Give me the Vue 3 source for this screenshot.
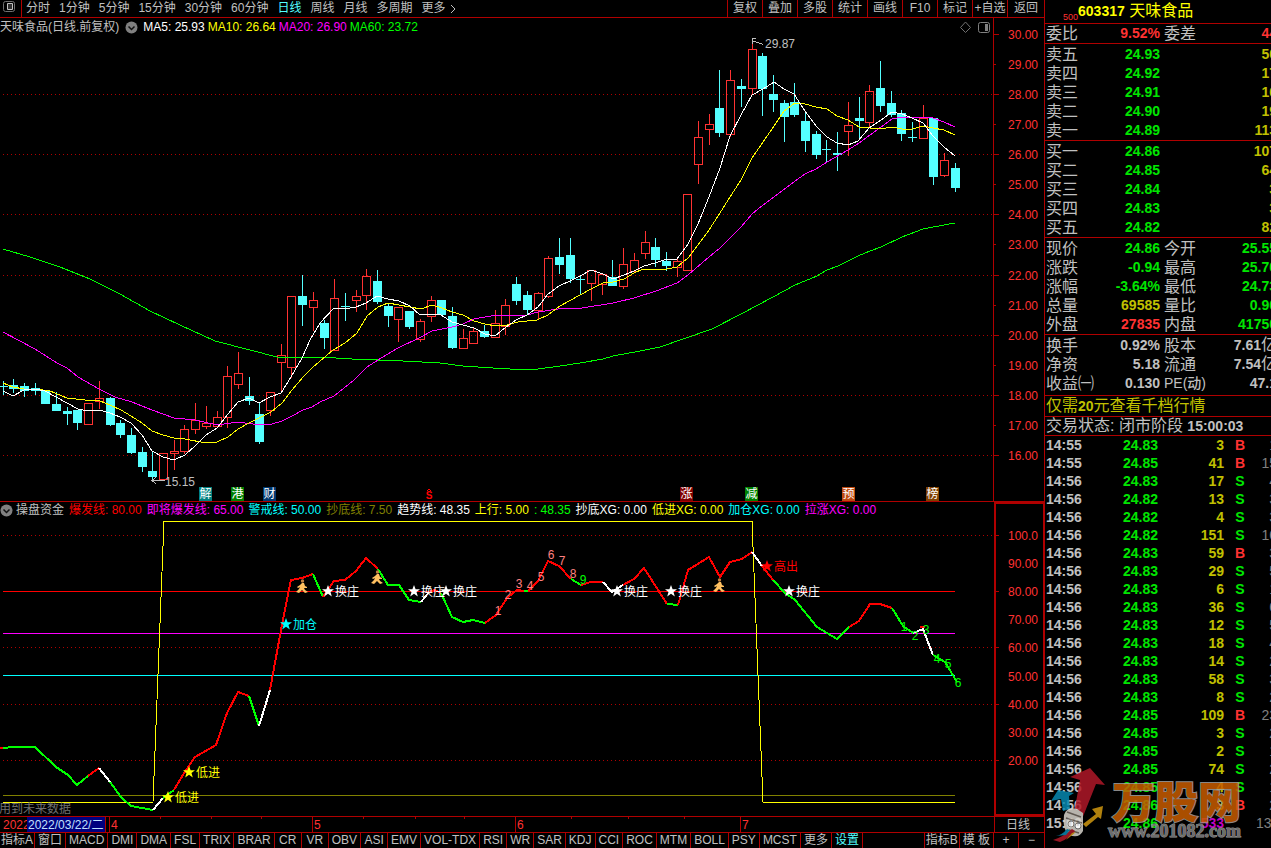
<script setup>
const periods = ['分时', '1分钟', '5分钟', '15分钟', '30分钟', '60分钟', '日线', '周线', '月线', '多周期', '更多']
const actions = ['复权', '叠加', '多股', '统计', '画线', 'F10', '标记', '+自选', '返回']

// Each candle: [rising, high, bodyTop, bodyBottom, low]
const candleRows = [
  [0, 381, 386, 386, 394], [0, 379, 385, 388, 392], [0, 383, 386, 390, 396], [0, 383, 388, 390, 394],
  [0, 390, 390, 403, 403], [0, 392, 404, 410, 410], [0, 407, 411, 413, 424], [0, 410, 410, 422, 429],
  [1, 403, 403, 424, 424], [1, 381, 398, 401, 408], [0, 397, 398, 424, 425], [0, 420, 423, 434, 437],
  [0, 428, 435, 452, 453], [0, 447, 452, 466, 471], [0, 452, 471, 476, 480], [1, 453, 453, 479, 479],
  [1, 440, 451, 453, 469], [1, 425, 429, 451, 453], [1, 403, 420, 429, 433], [1, 406, 423, 426, 428],
  [1, 411, 417, 426, 426], [1, 366, 376, 417, 427], [1, 352, 373, 384, 388], [0, 377, 396, 400, 404],
  [0, 403, 414, 441, 443], [1, 392, 392, 410, 415], [1, 344, 355, 362, 392], [1, 296, 296, 367, 377],
  [0, 275, 296, 304, 325], [1, 292, 300, 307, 330], [0, 320, 323, 337, 348], [1, 279, 298, 350, 350],
  [0, 293, 306, 306, 320], [1, 290, 296, 300, 311], [1, 269, 276, 295, 309], [0, 270, 281, 301, 303],
  [0, 303, 306, 315, 326], [1, 307, 307, 319, 341], [0, 311, 311, 326, 328], [1, 319, 321, 339, 341],
  [1, 296, 300, 316, 321], [0, 300, 300, 314, 314], [0, 307, 316, 347, 348], [1, 329, 338, 348, 348],
  [1, 327, 331, 343, 343], [0, 325, 331, 336, 337], [1, 310, 323, 337, 337], [1, 299, 305, 326, 334],
  [0, 277, 284, 300, 304], [0, 291, 295, 309, 314], [1, 292, 293, 310, 318], [1, 256, 258, 296, 297],
  [0, 238, 257, 264, 273], [0, 238, 255, 278, 282], [0, 276, 279, 279, 293], [1, 270, 270, 283, 300],
  [1, 274, 274, 284, 294], [0, 260, 277, 285, 285], [1, 248, 264, 286, 288], [1, 253, 260, 271, 271],
  [1, 231, 242, 253, 258], [0, 238, 247, 259, 266], [0, 252, 261, 265, 270], [1, 259, 261, 267, 276],
  [1, 194, 194, 270, 270], [1, 121, 137, 164, 183], [1, 114, 124, 129, 144], [0, 70, 108, 132, 136],
  [1, 70, 80, 134, 136], [0, 79, 86, 88, 106], [1, 38, 49, 88, 93], [0, 53, 56, 88, 115],
  [0, 75, 94, 99, 111], [0, 100, 103, 116, 141], [0, 83, 102, 114, 116], [0, 113, 121, 140, 151],
  [0, 131, 134, 154, 158], [0, 140, 149, 149, 162], [0, 132, 153, 154, 170], [1, 102, 125, 131, 155],
  [0, 97, 118, 120, 137], [1, 85, 91, 122, 126], [0, 61, 88, 105, 111], [0, 91, 103, 114, 116],
  [0, 110, 113, 133, 140], [0, 122, 137, 137, 141], [1, 105, 118, 138, 138], [0, 118, 118, 176, 184],
  [1, 153, 160, 175, 176], [0, 163, 168, 187, 191],
]
const candles = candleRows.map(([up, high, top, bottom, low], i) => ({
  x: Math.floor(3 + 10.7 * i), up, high, top, bottom, low,
}))

const averages = [
  { color: '#00ff00', points: '3,249 30,257 60,267 90,279 120,294 150,311 180,325 215,341 250,350 277,357 320,357 352,359 403,361 440,363 463,366 493,368 510,369 538,369 560,366 580,363 603,359 613,356 635,352 660,347 712,329 743,313 773,297 795,285 817,276 827,270 838,266 858,256 870,251 881,247 902,237 923,229 944,225 955,223' },
  { color: '#ff00ff', points: '3,332 18,340 35,349 57,363 67,368 78,377 99,389 115,397 132,402 152,410 174,418 195,420 217,425 238,422 260,425 272,424 282,421 292,416 303,410 312,407 320,402 334,396 354,380 367,367 378,360 398,348 421,337 432,331 442,329 452,327 463,324 474,319 485,317 497,315 520,315 527,315 538,312 558,309 582,308 613,303 634,298 656,291 677,283 688,275 709,257 720,248 741,227 752,214 763,205 774,197 795,181 805,174 816,169 827,162 848,150 859,143 881,127 892,119 902,117 923,117 933,118 944,122 955,127' },
  { color: '#ffff00', points: '3,383 13,387 24,389 35,389 50,391 67,398 85,400 100,401 110,405 121,410 131,416 142,423 152,431 163,435 174,438 185,439 206,443 217,442 228,437 238,429 249,423 259,418 271,412 282,403 292,390 303,377 312,368 320,361 333,350 345,343 357,333 367,316 378,307 388,303 399,305 410,307 421,309 432,305 442,308 452,312 463,315 474,321 485,324 496,326 507,325 518,322 537,320 548,315 560,306 580,295 591,289 603,283 613,282 624,279 634,273 643,269 667,269 677,267 688,258 698,245 709,230 720,213 730,197 741,180 752,158 763,142 774,126 784,111 795,103 805,104 816,107 827,109 837,116 848,120 859,127 881,129 892,127 902,129 912,129 923,126 933,128 944,130 955,135' },
  { color: '#ffffff', points: '3,391 13,396 24,390 35,389 45,391 56,397 67,403 78,409 88,411 99,410 110,413 120,417 131,423 142,435 152,451 163,457 174,460 185,455 195,446 206,435 217,428 228,414 238,402 249,398 259,403 270,397 281,393 291,377 302,358 310,340 320,323 334,308 345,309 356,307 366,303 377,296 388,299 399,301 410,306 420,315 431,314 441,315 452,322 463,325 474,328 485,334 495,336 506,327 516,320 527,315 538,307 548,294 559,286 570,281 580,276 591,270 603,274 613,279 624,275 634,271 644,266 655,263 667,259 677,259 688,244 698,224 709,197 720,168 730,136 741,115 752,95 763,89 774,82 784,89 794,94 805,111 816,126 827,137 837,143 848,145 858,141 869,128 881,120 892,112 902,114 912,118 923,123 933,136 944,147 955,156' },
]

const priceTicks = Array.from({ length: 15 }, (_, i) => ({
  label: (30 - i).toFixed(2), y: Math.round(34 + 30.07 * i), major: i % 2 === 0,
}))
const badges = [
  { x: 199, text: '解', color: '#008080' }, { x: 231, text: '港', color: '#008000' },
  { x: 263, text: '财', color: '#003870' }, { x: 680, text: '涨', color: '#800000' },
  { x: 745, text: '减', color: '#008000' }, { x: 842, text: '预', color: '#c04a10' },
  { x: 926, text: '榜', color: '#804000' },
]

const maLegend = [
  ['MA5: 25.93', 'white'], ['MA10: 26.64', 'yellow'], ['MA20: 26.90', 'magenta'], ['MA60: 23.72', 'lime'],
]
const trendLegend = [
  ['爆发线: 80.00', 'red'], ['即将爆发线: 65.00', 'magenta'], ['警戒线: 50.00', 'cyan'], ['抄底线: 7.50', 'olive'],
  ['趋势线: 48.35', 'white'], ['上行: 5.00', 'yellow'], [': 48.35', 'lime'], ['抄底XG: 0.00', 'white'],
  ['低进XG: 0.00', 'yellow'], ['加仓XG: 0.00', 'cyan'], ['拉涨XG: 0.00', 'magenta'],
]

const levels = [[591, '#ff0000'], [633, '#ff00ff'], [675, '#00ffff'], [795, '#808000']]
const trendTicks = [
  ['100.0', 535], ['90.00', 563], ['80.00', 591], ['70.00', 619], ['60.00', 647],
  ['50.00', 676], ['40.00', 704], ['30.00', 732], ['20.00', 760],
]
const R = '#ff0000'
const G = '#00ff00'
const W = '#ffffff'
const segments = [
  [R, '0,748 3,748'], [G, '3,748 13,747 35,747 56,767 68,775 77,785 88,776'], [R, '88,776 99,768'],
  [W, '99,768 110,782'], [G, '110,782 121,797 131,806 142,808 153,810'], [W, '153,810 163,798'],
  [G, '163,798 174,790'], [R, '174,790 184,773 195,757 216,745 227,713 238,692 249,696'], [G, '249,696 259,726'],
  [W, '259,726 270,690'], [R, '270,690 281,630 291,580 302,578 313,574'], [G, '313,574 323,597'],
  [R, '323,597 334,581 345,580 356,571 366,558 378,569'], [G, '378,569 388,585 399,585 409,600 421,602'],
  [W, '421,602 429,592'], [R, '429,592 435,590 441,593'], [G, '441,593 452,617 463,622 473,620 485,623'],
  [R, '485,623 496,615 507,598 517,590 524,591'], [G, '524,591 528,591'], [R, '528,591 538,581 548,561 559,566 571,579'],
  [G, '571,579 581,585'], [R, '581,585 591,582 603,582'], [W, '603,582 612,592 623,585'],
  [R, '623,585 634,579 644,568 667,604'], [G, '667,604 678,605'],
  [R, '678,605 688,570 709,557 720,577 730,562 742,559 752,552'], [W, '752,552 762,566'], [R, '762,566 773,580'],
  [G, '773,580 785,593 795,600 817,627 837,639 849,627'], [R, '849,627 859,621 870,604 880,604 892,608'],
  [G, '892,608 903,626 913,633'], [R, '920,627 925,627'], [W, '913,633 923,629 933,655'], [G, '933,655 945,662 957,682'],
]
const signals = [
  { x: 328, y: 591, text: '换庄', color: W }, { x: 414, y: 591, text: '换庄', color: W },
  { x: 446, y: 591, text: '换庄', color: W }, { x: 617, y: 591, text: '换庄', color: W },
  { x: 671, y: 591, text: '换庄', color: W }, { x: 789, y: 591, text: '换庄', color: W },
  { x: 767, y: 566, text: '高出', color: R }, { x: 286, y: 624, text: '加仓', color: '#00ffff' },
  { x: 189, y: 772, text: '低进', color: '#ffff00' }, { x: 168, y: 797, text: '低进', color: '#ffff00' },
]
const P = '#ff8080'
const counts = [
  [1, 498, 611, P], [2, 508, 595, P], [3, 519, 584, P], [4, 530, 586, P], [5, 541, 577, P], [6, 551, 555, P],
  [7, 562, 561, P], [8, 573, 574, P], [9, 583, 580, G],
  [1, 904, 627, G], [2, 915, 636, G], [3, 926, 630, G], [4, 937, 659, G], [5, 948, 664, G], [6, 958, 683, G],
]
const runners = [[302, 586], [377, 577], [719, 585]]
const star = 'M0,-6 L1.6,-1.8 L6,-1.8 L2.5,0.9 L3.8,5.4 L0,2.7 L-3.8,5.4 L-2.5,0.9 L-6,-1.8 L-1.6,-1.8 Z'

const months = [[109, '4'], [312, '5'], [515, '6'], [740, '7']]
const weekMarks = [160, 211, 261, 363, 415, 464, 571, 628, 684]

const indicators = ['指标A', '窗口', 'MACD', 'DMI', 'DMA', 'FSL', 'TRIX', 'BRAR', 'CR', 'VR', 'OBV', 'ASI', 'EMV', 'VOL-TDX', 'RSI', 'WR', 'SAR', 'KDJ', 'CCI', 'ROC', 'MTM', 'BOLL', 'PSY', 'MCST', '更多', '设置']

const asks = [['卖五', '24.93', '50'], ['卖四', '24.92', '17'], ['卖三', '24.91', '16'], ['卖二', '24.90', '19'], ['卖一', '24.89', '113']]
const bids = [['买一', '24.86', '107'], ['买二', '24.85', '64'], ['买三', '24.84', '3'], ['买四', '24.83', '3'], ['买五', '24.82', '82']]
const quotes = [
  ['现价', '24.86', 'green', '今开', '25.55', 'green'],
  ['涨跌', '-0.94', 'green', '最高', '25.70', 'green'],
  ['涨幅', '-3.64%', 'green', '最低', '24.73', 'green'],
  ['总量', '69585', 'gold', '量比', '0.90', 'green'],
  ['外盘', '27835', 'hot', '内盘', '41750', 'green'],
]
const basics = [
  ['换手', '0.92%', '股本', '7.61', '亿'],
  ['净资', '5.18', '流通', '7.54', '亿'],
  ['收益㈠', '0.130', 'PE(动)', '47.1', ''],
]
const trades = [
  ['14:55', '24.83', 3, 'B', 1], ['14:55', '24.85', 41, 'B', 15], ['14:56', '24.83', 17, 'S', 4],
  ['14:56', '24.82', 13, 'S', 3], ['14:56', '24.82', 4, 'S', 3], ['14:56', '24.82', 151, 'S', 16],
  ['14:56', '24.83', 59, 'B', 3], ['14:56', '24.83', 29, 'S', 5], ['14:56', '24.83', 6, 'S', 1],
  ['14:56', '24.83', 36, 'S', 6], ['14:56', '24.83', 12, 'S', 5], ['14:56', '24.83', 18, 'S', 4],
  ['14:56', '24.83', 14, 'S', 2], ['14:56', '24.83', 58, 'S', 3], ['14:56', '24.83', 8, 'S', 2],
  ['14:56', '24.85', 109, 'B', 23], ['14:56', '24.85', 3, 'S', 2], ['14:56', '24.85', 2, 'S', 1],
  ['14:56', '24.85', 74, 'S', 2], ['14:56', '24.85', 4, 'S', 1], ['14:56', '24.86', 3, 'B', 2],
  ['15:00', '24.86', 533, '', 130],
]
</script>

<template>
  <div class="terminal">
    <main class="main">
      <nav class="toolbar">
        <button class="layout-toggle" aria-label="布局">
          <svg width="22" height="17" viewBox="0 0 22 17">
            <rect x="3.5" y="1.5" width="11" height="10" rx="2" fill="none" stroke="#707070" />
            <path d="M7.500,3.500 H12.500 V9.500 H7.500 Z" fill="#303030" stroke="#c0c0c0" />
          </svg>
        </button>
        <div class="periods">
          <button v-for="p in periods" :key="p" :class="{ current: p === '日线' }">{{ p }}</button>
          <svg class="chevron" width="6" height="10" viewBox="0 0 6 10"><path d="M1,1 L5,5 L1,9" fill="none" stroke="#c0c0c0" /></svg>
        </div>
        <div class="actions">
          <button v-for="a in actions" :key="a">{{ a }}</button>
        </div>
      </nav>

      <section class="panel">
        <div class="legend">
          <span>天味食品(日线.前复权)</span>
          <svg class="fold" width="13" height="13" viewBox="0 0 13 13"><circle cx="6.500" cy="6.500" r="6" fill="#808080" /><path d="M3.500,5.500 L6.500,8.500 L9.500,5.500" fill="none" stroke="#101010" stroke-width="1.500" /></svg>
          <span class="ma"><span v-for="[t, c] in maLegend" :key="t" :class="c">{{ t }}</span></span>
        </div>
        <svg class="chart" viewBox="0 18 1044 484">
          <g shape-rendering="crispEdges">
            <template v-for="t in priceTicks" :key="t.label">
              <path v-if="t.major && t.label !== '30.00'" class="grid" :d="`M3,${t.y + 0.5} H993`" />
              <path class="rule" :d="`M993,${t.y + 0.5} h${t.major ? 6 : 3}`" />
            </template>
            <path class="rule" d="M993.500,18 V502 M0,501.500 H1044" />
            <template v-for="c in candles" :key="c.x">
              <template v-if="c.up">
                <rect class="up" :x="c.x" :y="c.high" width="1" :height="c.top - c.high" />
                <rect class="up" :x="c.x" :y="c.bottom" width="1" :height="c.low - c.bottom + 1" />
                <rect class="hollow" :x="c.x - 3.5" :y="c.top + 0.5" width="8" :height="c.bottom - c.top" />
              </template>
              <template v-else>
                <rect class="down" :x="c.x" :y="c.high" width="1" :height="c.low - c.high + 1" />
                <rect class="down" :x="c.x - 4" :y="c.top" width="9" :height="c.bottom - c.top + 1" />
              </template>
            </template>
            <polyline v-for="m in averages" :key="m.color" class="line" :points="m.points" :stroke="m.color" />
            <path class="pointer" d="M763,44.500 L752,40.500 M752,44 V39 L756,38 M152,480.500 H165 M156,477 L152,480.500 L156,484" />
          </g>
          <g class="axis-text">
            <text v-for="t in priceTicks" :key="t.label" x="1008" :y="t.y + 5">{{ t.label }}</text>
          </g>
          <text class="note" x="765" y="48">29.87</text>
          <text class="note" x="165" y="486">15.15</text>
          <g v-for="b in badges" :key="b.x">
            <rect :x="b.x" y="487" width="13" height="14" :fill="b.color" />
            <text class="badge" :x="b.x + 6.5" y="498">{{ b.text }}</text>
          </g>
          <path d="M427,491 L429,489 L431,491" fill="none" stroke="#ff0000" />
          <text class="flag" x="429" y="499">S</text>
          <path d="M965.500,22 L970.500,27.500 L965.500,32.500 L960.500,27.500 Z" fill="none" stroke="#707070" />
          <rect x="978.500" y="22.500" width="11" height="10" rx="2" fill="none" stroke="#808080" />
          <rect x="985" y="24" width="3" height="7" fill="#808080" />
        </svg>
      </section>

      <section class="panel">
        <div class="legend trend">
          <svg class="fold" width="13" height="13" viewBox="0 0 13 13"><circle cx="6.500" cy="6.500" r="6" fill="#808080" /><path d="M3.500,5.500 L6.500,8.500 L9.500,5.500" fill="none" stroke="#101010" stroke-width="1.500" /></svg>
          <span>操盘资金</span>
          <span v-for="[t, c] in trendLegend" :key="t" :class="c">{{ t }}</span>
        </div>
        <svg class="chart" viewBox="0 502 1044 314">
          <g shape-rendering="crispEdges">
            <path class="grid" d="M3,535.500 H993 M3,647.500 H993 M3,704.500 H993 M3,760.500 H993" />
            <path v-for="[y, c] in levels" :key="y" :d="`M3,${y + 0.5} H955`" :stroke="c" />
            <path v-for="([t, y], i) in trendTicks" :key="t" class="rule" :d="`M995,${y + 0.5} h${i % 2 ? 1 : 4}`" />
            <rect x="995" y="503" width="49" height="312" fill="none" stroke="#b00000" stroke-width="2" />
            <polyline class="line" stroke="#ffff00" points="3,802 153,802 164,521 752,521 763,802 955,802" />
            <polyline v-for="([c, pts], i) in segments" :key="i" class="trend-line" :points="pts" :stroke="c" />
          </g>
          <g class="axis-text">
            <text v-for="[t, y] in trendTicks" :key="t" x="1008" :y="y + 5">{{ t }}</text>
          </g>
          <text v-for="[n, x, y, c] in counts" :key="x" class="count" :x="x" :y="y + 4" :fill="c">{{ n }}</text>
          <g v-for="[x, y] in runners" :key="x" :transform="`translate(${x} ${y})`" fill="#ffc060">
            <circle cx="0.500" cy="-5" r="1.700" fill="#c08040" />
            <path d="M0,-3 L2,-3 L3,0 L5,1 L5,2 L2,2 L3,4 L6,6 L3,7 L0,4 L-3,7 L-6,6 L-3,3 L-2,1 L-4,2 L-5,1 L-2,-1 Z" />
          </g>
          <g v-for="s in signals" :key="s.x" :fill="s.color">
            <path :d="star" :transform="`translate(${s.x} ${s.y})`" />
            <text :x="s.x + 7" :y="s.y + 5">{{ s.text }}</text>
          </g>
          <text x="-1" y="813" fill="#707070">用到未来数据</text>
        </svg>
      </section>

      <section class="dates">
        <svg class="chart" viewBox="0 816 1044 17">
          <path class="rule" d="M0,816.500 H1044 M0,832.500 H1044 M105.500,816 V832 M994.500,816 V832" />
          <path v-for="w in weekMarks" :key="w" class="rule" :d="`M${w + 0.5},816 v3`" />
          <text class="date-red" x="3" y="829">2022</text>
          <rect x="27" y="817" width="78" height="15" fill="#000080" />
          <text x="28" y="829" fill="#c0e0ff">2022/03/22/二</text>
          <g v-for="[x, m] in months" :key="m">
            <path class="rule" :d="`M${x + 0.5},816 V832`" />
            <text class="date-red" :x="x + 2" y="829">{{ m }}</text>
          </g>
          <text x="1006" y="829" fill="#c0c0c0">日线</text>
        </svg>
      </section>

      <nav class="tabs">
        <button v-for="t in indicators" :key="t" :class="{ current: t === '设置' }">{{ t }}</button>
        <div class="tabs-end">
          <button>指标B</button>
          <button>模 板</button>
          <button class="zoom">+</button>
          <button class="zoom">−</button>
        </div>
      </nav>
    </main>

    <aside class="side">
      <div class="side-body">
        <h1 class="title"><small>500</small><b>603317</b> 天味食品</h1>
        <table class="quote">
          <colgroup><col class="c1"><col class="c2"><col class="c3"><col class="c4"></colgroup>
          <tbody class="single">
            <tr><th>委比</th><td class="hot">9.52%</td><th>委差</th><td class="hot">44</td></tr>
          </tbody>
          <tbody>
            <tr v-for="r in asks" :key="r[0]"><th>{{ r[0] }}</th><td class="green">{{ r[1] }}</td><th></th><td class="gold">{{ r[2] }}</td></tr>
          </tbody>
          <tbody>
            <tr v-for="r in bids" :key="r[0]"><th>{{ r[0] }}</th><td class="green">{{ r[1] }}</td><th></th><td class="gold">{{ r[2] }}</td></tr>
          </tbody>
          <tbody>
            <tr v-for="r in quotes" :key="r[0]"><th>{{ r[0] }}</th><td :class="r[2]">{{ r[1] }}</td><th>{{ r[3] }}</th><td :class="r[5]">{{ r[4] }}</td></tr>
          </tbody>
          <tbody class="basics">
            <tr v-for="r in basics" :key="r[0]"><th>{{ r[0] }}</th><td>{{ r[1] }}</td><th :class="{ latin: r[2] === 'PE(动)' }">{{ r[2] }}</th><td>{{ r[3] }}<i v-if="r[4]">{{ r[4] }}</i></td></tr>
          </tbody>
        </table>
        <a class="promo" href="#">仅需<b>20</b>元查看千档行情</a>
        <p class="status">交易状态: 闭市阶段 <b>15:00:03</b></p>
        <table class="trades">
          <colgroup><col class="t1"><col class="t2"><col class="t3"><col class="t4"><col class="t5"></colgroup>
          <tbody>
            <tr v-for="(r, i) in trades" :key="i">
              <td>{{ r[0] }}</td>
              <td class="green">{{ r[1] }}</td>
              <td :class="r[3] ? 'gold' : 'purple'">{{ r[2] }}</td>
              <td :class="r[3] === 'B' ? 'hot' : 'green'">{{ r[3] }}</td>
              <td>{{ r[4] }}</td>
            </tr>
          </tbody>
        </table>
      </div>
      <svg class="watermark" width="200" height="82" viewBox="1048 766 200 82">
        <g opacity="0.85">
          <path d="M1070,777 L1090,768 L1105,785 L1096,784 L1082,819 L1074,813 L1080,780 Z" fill="#b01828" />
          <path d="M1051,801 L1058,790 L1074,793 L1069,796 L1070,809 L1063,811 L1061,799 Z" fill="#0888b0" />
          <path d="M1083,824 L1096,814 L1092,809 L1103,806 L1101,819 L1098,817 L1086,827 Z" fill="#d09810" />
          <path d="M1064,815 Q1067,806 1077,809 L1083,813 L1083,831 Q1079,839 1069,835 Q1062,829 1064,815 Z" fill="#d8d4cc" />
          <path d="M1067,812 L1081,817 M1066,818 L1082,823 M1069,830 L1079,833" stroke="#706860" stroke-width="1.500" />
          <circle cx="1071" cy="824" r="3" fill="#fff" stroke="#777" /><circle cx="1078" cy="826" r="3" fill="#fff" stroke="#777" />
          <path d="M1072,829 Q1063,837 1053,840 L1060,842 Q1070,838 1075,831 Z" fill="#b01828" />
          <path d="M1067,829 Q1062,835 1056,836 L1066,835 L1070,830 Z" fill="#0888b0" />
          <path d="M1072,833 L1066,840 L1076,832 Z" fill="#d09810" />
        </g>
        <text class="brand" x="1112" y="818">万股网</text>
        <text class="site" x="1108" y="837">www.201082.com</text>
      </svg>
    </aside>
  </div>
</template>

<style>
body {
  background: #000;
}
</style>

<style scoped>
.terminal {
  display: flex;
  min-height: 100vh;
  overflow: hidden;
  background: #000;
  color: #c0c0c0;
  font: 12px/15px "Liberation Sans", "Noto Sans CJK SC", sans-serif;
}
.main {
  flex: 1;
  min-width: 0;
}
button {
  margin: 0;
  padding: 0;
  border: 0;
  background: none;
  color: inherit;
  font: inherit;
  white-space: nowrap;
  cursor: pointer;
}
.toolbar {
  display: flex;
  height: 17px;
  border-bottom: 1px solid #b00000;
}
.layout-toggle {
  width: 22px;
  border-right: 1px solid #b00000;
}
.layout-toggle svg,
.fold {
  display: block;
}
.periods {
  display: flex;
  align-items: center;
  gap: 9px;
  padding-left: 4px;
}
.chevron {
  margin-left: -5px;
}
.actions {
  display: flex;
  margin-left: auto;
}
.actions button {
  width: 35px;
  border-left: 1px solid #b00000;
}
.actions button:last-child {
  width: 37px;
}
.current {
  color: #54ffff;
}
.panel {
  position: relative;
}
.chart {
  display: block;
  width: 100%;
  height: auto;
}
.legend {
  position: absolute;
  top: 2px;
  left: 0;
  display: flex;
  align-items: center;
  gap: 6px;
  white-space: nowrap;
}
.legend.trend {
  top: 1px;
  gap: 5px;
}
.trend .fold {
  margin-right: -2px;
}
.ma {
  display: flex;
  gap: 3px;
  margin-left: -1px;
}
.white { color: #fff; }
.yellow { color: #ff0; }
.magenta { color: #f0f; }
.lime { color: #0f0; }
.red { color: #f00; }
.cyan { color: #0ff; }
.olive { color: #808000; }
.grid {
  fill: none;
  stroke: #b00000;
  stroke-dasharray: 1 3;
}
.rule {
  fill: none;
  stroke: #b00000;
}
.up { fill: #ff3232; }
.hollow {
  fill: none;
  stroke: #ff3232;
}
.down { fill: #54ffff; }
.line {
  fill: none;
  stroke-width: 1;
}
.trend-line {
  fill: none;
  stroke-width: 2;
}
.pointer {
  fill: none;
  stroke: #c0c0c0;
}
.axis-text,
.date-red { fill: #ff3232; }
.note { fill: #c0c0c0; }
.badge {
  fill: #fff;
  text-anchor: middle;
}
.flag {
  fill: #f00;
  font-size: 10px;
  font-weight: bold;
  text-anchor: middle;
}
.count { text-anchor: middle; }
.tabs {
  display: flex;
  overflow: hidden;
}
.tabs button {
  min-width: 27px;
  padding: 0 3px;
  border-right: 1px solid #b00000;
}
.tabs button:first-child {
  padding: 0 1px;
}
.tabs-end {
  display: flex;
  margin-left: auto;
  border-left: 1px solid #b00000;
}
.tabs .zoom {
  width: 25px;
  min-width: 25px;
}
.tabs .zoom:last-child {
  border: 0;
}

.side {
  position: relative;
  flex: 0 0 226px;
  overflow: hidden;
  border-left: 1px solid #b00000;
}
.side-body {
  width: 232px;
  font-size: 14px;
}
.title {
  height: 23px;
  margin: 0;
  padding-left: 18px;
  border-bottom: 1px solid #b00000;
  color: #ff0;
  font-size: 16px;
  font-weight: normal;
  line-height: 21px;
}
.title small {
  color: #ff3232;
  font-size: 9px;
  vertical-align: -4px;
}
.title b,
.promo b,
.status b {
  font-size: 14px;
}
table {
  width: 232px;
  border-collapse: separate;
  border-spacing: 0;
  table-layout: fixed;
}
th,
td {
  padding: 0;
  white-space: nowrap;
}
.quote th {
  height: 19px;
  padding-left: 1px;
  font-size: 16px;
  font-weight: normal;
  line-height: 19px;
  text-align: left;
}
.quote td {
  font-weight: bold;
  line-height: 19px;
  text-align: right;
}
.quote th:nth-child(3) {
  padding-left: 4px;
}
.quote tbody:not(.single) tr:first-child > * {
  padding-top: 1px;
}
.quote tr:last-child > * {
  border-bottom: 1px solid #b00000;
}
.quote .basics tr:last-child > * {
  padding-bottom: 2px;
}
.quote .latin {
  font-size: 14px;
  font-weight: 500;
}
.quote i {
  font-size: 16px;
  font-style: normal;
  font-weight: normal;
  line-height: 1;
}
.c1 { width: 50px; }
.c2 { width: 65px; }
.c3 { width: 50px; }
.c4 { width: 67px; }
.green { color: #00e600; }
.gold { color: #c0c000; }
.hot { color: #ff3232; }
.purple { color: #c000c0; }
.promo,
.status {
  display: block;
  height: 20px;
  margin: 0;
  padding-left: 1px;
  border-bottom: 1px solid #b00000;
  font-size: 16px;
  line-height: 20px;
  white-space: nowrap;
}
.promo {
  color: #c0c000;
  text-decoration: none;
}
.status {
  height: 18px;
  line-height: 18px;
}
.trades td {
  height: 18px;
  font-weight: bold;
  line-height: 18px;
  text-align: right;
}
.trades td:first-child {
  padding-left: 1px;
  text-align: left;
}
.trades td:nth-child(4) {
  text-align: center;
}
.trades td:last-child {
  color: #808080;
  font-weight: normal;
}
.t1 { width: 50px; }
.t2 { width: 63px; }
.t3 { width: 66px; }
.t4 { width: 32px; }
.t5 { width: 21px; }
.watermark {
  position: absolute;
  top: 766px;
  left: 3px;
}
.brand {
  fill: #c85c00;
  stroke: #a0a0a0;
  stroke-width: 2px;
  paint-order: stroke;
  font-size: 43px;
  font-weight: 900;
  opacity: 0.85;
}
.site {
  fill: #808080;
  stroke: #b0b0b0;
  stroke-width: 1px;
  paint-order: stroke;
  font-family: "Liberation Serif", serif;
  font-size: 18px;
  font-weight: bold;
  opacity: 0.85;
}
</style>
